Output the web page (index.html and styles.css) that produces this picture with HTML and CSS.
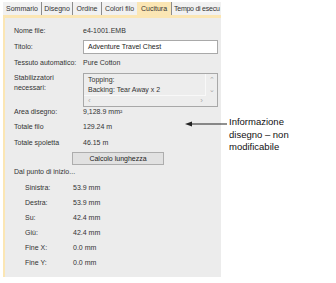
FILE: index.html
```html
<!DOCTYPE html>
<html lang="it">
  <head>
    <meta charset="UTF-8" />
    <title>Cucitura</title>
    <link rel="stylesheet" href="styles.css">
  </head>
  <body>
    <div class="page">
      <div class="dialog">
        <div class="tabs">
          <span class="tab t-somm">Sommario</span>
          <span class="tab t-dis">Disegno</span>
          <span class="tab t-ord">Ordine</span>
          <span class="tab t-col">Colori filo</span>
          <span class="tab t-cuc">Cucitura</span>
          <span class="tab t-tempo">Tempo di esecu</span>
        </div>
        <div class="panel">
          <div class="row r-file"><span class="lbl">Nome file:</span><span>e4-1001.EMB</span></div>
          <div class="row r-title">
            <span class="lbl">Titolo:</span>
            <div class="field">Adventure Travel Chest</div>
          </div>
          <div class="row r-tess"><span class="lbl">Tessuto automatico:</span><span>Pure Cotton</span></div>
          <div class="row r-stab">
            <span class="lbl lbl-2">Stabilizzatori<br />necessari:</span>
            <div class="listbox">
              <div class="list-text">Topping:<br />Backing: Tear Away x 2</div>
              <div class="vscroll"><span>&#8963;</span><span>&#8964;</span></div>
              <div class="hscroll"><span>&lsaquo;</span><span>&rsaquo;</span></div>
            </div>
          </div>
          <div class="row r-area"><span class="lbl">Area disegno:</span><span>9,128.9 mm&sup2;</span></div>
          <div class="row r-filo"><span class="lbl">Totale filo</span><span>129.24 m</span></div>
          <div class="row r-spol"><span class="lbl">Totale spoletta</span><span>46.15 m</span></div>
          <div class="btn">Calcolo lunghezza</div>
          <div class="row r-dal">Dal punto di inizio...</div>
          <div class="sub first"><span class="lbl">Sinistra:</span><span>53.9 mm</span></div>
          <div class="sub"><span class="lbl">Destra:</span><span>53.9 mm</span></div>
          <div class="sub"><span class="lbl">Su:</span><span>42.4 mm</span></div>
          <div class="sub"><span class="lbl">Giù:</span><span>42.4 mm</span></div>
          <div class="sub"><span class="lbl">Fine X:</span><span>0.0 mm</span></div>
          <div class="sub"><span class="lbl">Fine Y:</span><span>0.0 mm</span></div>
        </div>
      </div>
      <p class="note">Informazione<br />disegno – non<br />modificabile</p>
      <svg class="arrow" width="44" height="10" viewBox="0 0 44 10">
        <line x1="4" y1="5" x2="43" y2="5" stroke="#222" stroke-width="1" />
        <polygon points="1,5 8,2.5 8,7.5" fill="#222" />
      </svg>
    </div>
  </body>
</html>
```

FILE: styles.css
```css
* {
  box-sizing: border-box;
  margin: 0;
  padding: 0;
}
body {
  background-color: #fff;
  font-family: 'Liberation Sans', Arial, sans-serif;
  color: #333;
}
.page {
  position: relative;
  display: flex;
  align-items: flex-start;
}
.dialog {
  width: 218px;
  margin: 2px 0 0 3px;
  font-size: 7px;
}
.tabs {
  display: flex;
  height: 13px;
  line-height: 13px;
  background-color: #f1f1f1;
  white-space: nowrap;
  overflow: hidden;
  color: #333;
}
.tab {
  flex: none;
  text-align: center;
  border-right: 1px solid #8c8c8c;
}
.t-somm {
  width: 39px;
}
.t-dis {
  width: 31px;
}
.t-ord {
  width: 29px;
}
.t-col {
  width: 35px;
  border-right: none;
}
.t-cuc {
  width: 35px;
  background-color: #fbe6b4;
}
.t-tempo {
  text-align: left;
  padding-left: 2px;
  letter-spacing: -0.25px;
  border-right: none;
}
.panel {
  height: 262px;
  background-color: #ececec;
  border-top: 3px solid #fbe6b4;
  border-left: 2px solid #fbe6b4;
  padding-left: 9px;
  display: flex;
  flex-direction: column;
}
.row {
  display: flex;
  align-items: center;
  height: 10px;
  line-height: 10px;
  white-space: nowrap;
}
.lbl {
  width: 69px;
  flex: none;
}
.r-file {
  margin-top: 8px;
}
.r-title {
  height: 14px;
  margin-top: 4px;
}
.field {
  width: 135px;
  height: 14px;
  line-height: 12px;
  padding-left: 4px;
  background-color: #fff;
  border: 1px solid #a9a9a9;
  color: #222;
}
.r-tess {
  margin-top: 4px;
}
.r-stab {
  height: 34px;
  margin-top: 5px;
  align-items: flex-start;
}
.listbox {
  width: 135px;
  height: 34px;
  border: 1px solid #a8a8a8;
  background-color: #ededed;
  display: grid;
  grid-template-columns: 1fr 11px;
  grid-template-rows: 22px 1fr;
}
.list-text {
  padding: 1px 0 0 4px;
  border-right: 1px solid #f8f8f8;
  border-bottom: 1px solid #f8f8f8;
  line-height: 10px;
}
.vscroll {
  display: flex;
  flex-direction: column;
  align-items: center;
  color: #aaa;
  font-size: 7px;
  line-height: 10px;
  padding-top: 1px;
}
.hscroll {
  grid-column: 1 / 3;
  display: flex;
  justify-content: space-between;
  padding: 0 14px 0 4px;
  color: #aaa;
  font-size: 8px;
  line-height: 10px;
}
.r-filo {
  margin-top: 5px;
}
.r-spol {
  margin-top: 6px;
}
.btn {
  width: 92px;
  height: 13px;
  line-height: 11px;
  margin: 4px 0 0 58px;
  text-align: center;
  background-color: #e1e1e1;
  border: 1px solid #adadad;
  color: #222;
}
.r-dal {
  margin-top: 2px;
}
.sub {
  display: flex;
  align-items: center;
  height: 10px;
  line-height: 10px;
  margin-top: 5px;
  padding-left: 11px;
}
.sub.first {
  margin-top: 6px;
}
.sub .lbl {
  width: 48px;
}
.note {
  margin: 116px 0 0 8px;
  font-size: 9.5px;
  line-height: 12.5px;
  color: #111;
}
.arrow {
  position: absolute;
  left: 184px;
  top: 119px;
}
```
